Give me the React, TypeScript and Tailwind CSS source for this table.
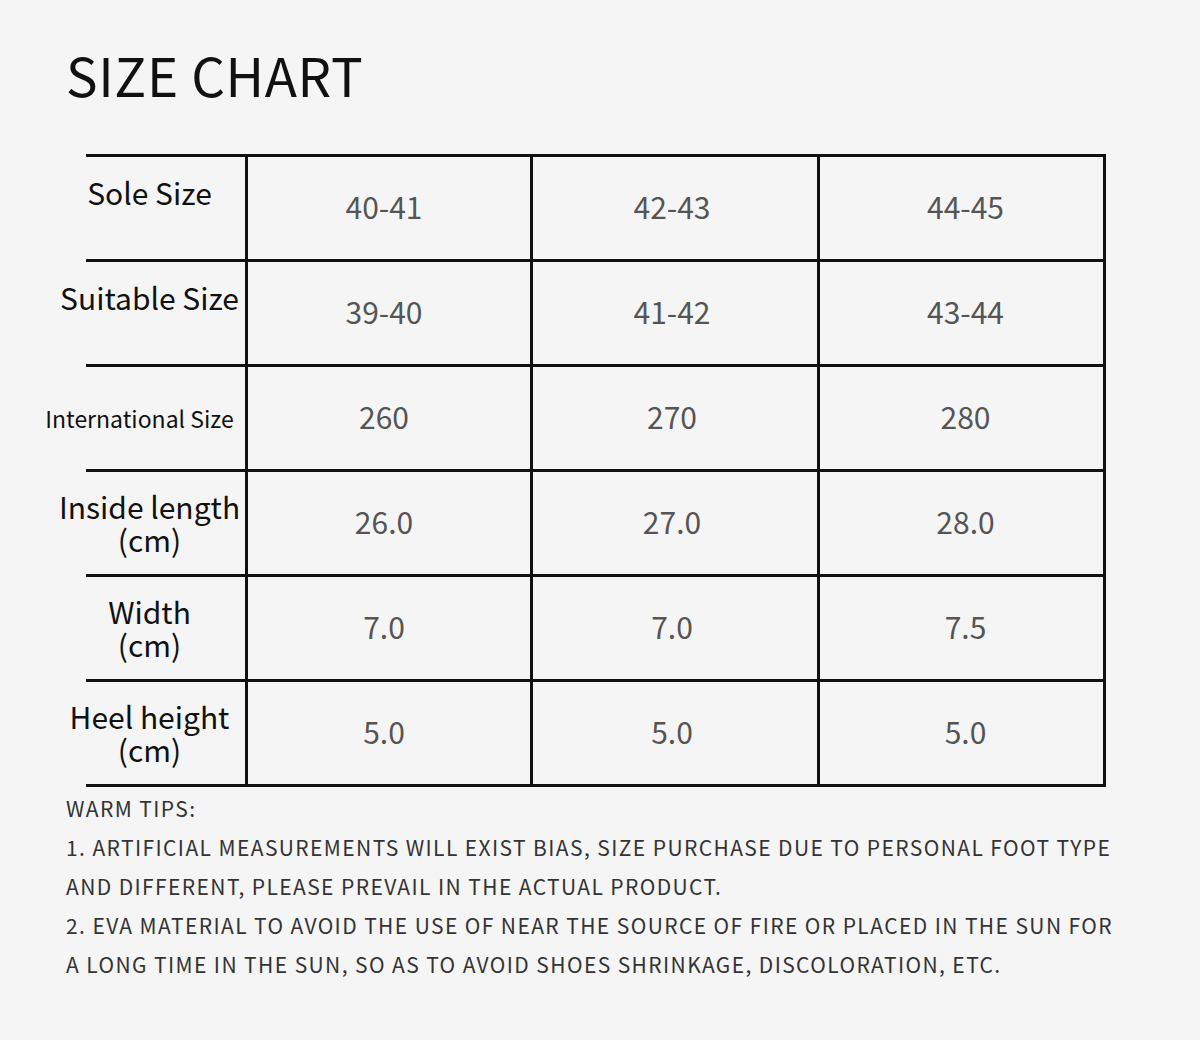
const FONT = { fontFamily: '"Noto Sans CJK SC", "Noto Sans", sans-serif' };

type Row = { label: string[]; values: string[]; small?: boolean; raised?: boolean };

const rows: Row[] = [
  { label: ["Sole Size"], values: ["40-41", "42-43", "44-45"], raised: true },
  { label: ["Suitable Size"], values: ["39-40", "41-42", "43-44"], raised: true },
  { label: ["International Size"], values: ["260", "270", "280"], small: true },
  { label: ["Inside length", "(cm)"], values: ["26.0", "27.0", "28.0"] },
  { label: ["Width", "(cm)"], values: ["7.0", "7.0", "7.5"] },
  { label: ["Heel height", "(cm)"], values: ["5.0", "5.0", "5.0"] },
];

// value columns, slightly uneven like the original artwork
const cols = ["w-[285px] pr-[10px]", "w-[287px] pr-[6px]", "w-[286px] pl-[8px]"];

const tips = [
  "WARM TIPS:",
  "1. ARTIFICIAL MEASUREMENTS WILL EXIST BIAS, SIZE PURCHASE DUE TO PERSONAL FOOT TYPE",
  "AND DIFFERENT, PLEASE PREVAIL IN THE ACTUAL PRODUCT.",
  "2. EVA MATERIAL TO AVOID THE USE OF NEAR THE SOURCE OF FIRE OR PLACED IN THE SUN FOR",
  "A LONG TIME IN THE SUN, SO AS TO AVOID SHOES SHRINKAGE, DISCOLORATION, ETC.",
];

export default function App() {
  return (
    <div className="w-[1200px] h-[1040px] bg-[#f5f5f5] overflow-hidden" style={FONT}>
      <h1 className="ml-[66px] pt-[48px] text-[53px] leading-none text-[#111] tracking-[0.6px]">
        SIZE CHART
      </h1>

      <div className="ml-[86px] mt-[53px] w-[1020px] border-t-[3px] border-[#111]">
        {rows.map((r) => (
          <div key={r.label.join(" ")} className="flex h-[105px] border-b-[3px] border-[#111]">
            <div className="w-[162px] shrink-0 border-r-[3px] border-[#111] flex items-center justify-center">
              <div
                className={`whitespace-nowrap text-center text-[#111] ${
                  r.small ? "text-[23px] leading-[30px] mr-[52px]" : "text-[30px] leading-[33px] mr-[32px]"
                } ${r.raised ? "mb-[32px]" : ""}`}
              >
                {r.label.map((l) => (
                  <div key={l}>{l}</div>
                ))}
              </div>
            </div>
            {r.values.map((v, i) => (
              <div
                key={i}
                className={`${cols[i]} shrink-0 flex items-center justify-center pb-[3px] text-[30px] text-[#555] border-r-[3px] border-[#111]`}
              >
                {v}
              </div>
            ))}
          </div>
        ))}
      </div>

      <div className="ml-[66px] mt-[2px] text-[21px] leading-[39px] text-[#333] tracking-[1.4px]">
        {tips.map((t) => (
          <div key={t} className="whitespace-nowrap">
            {t}
          </div>
        ))}
      </div>
    </div>
  );
}
